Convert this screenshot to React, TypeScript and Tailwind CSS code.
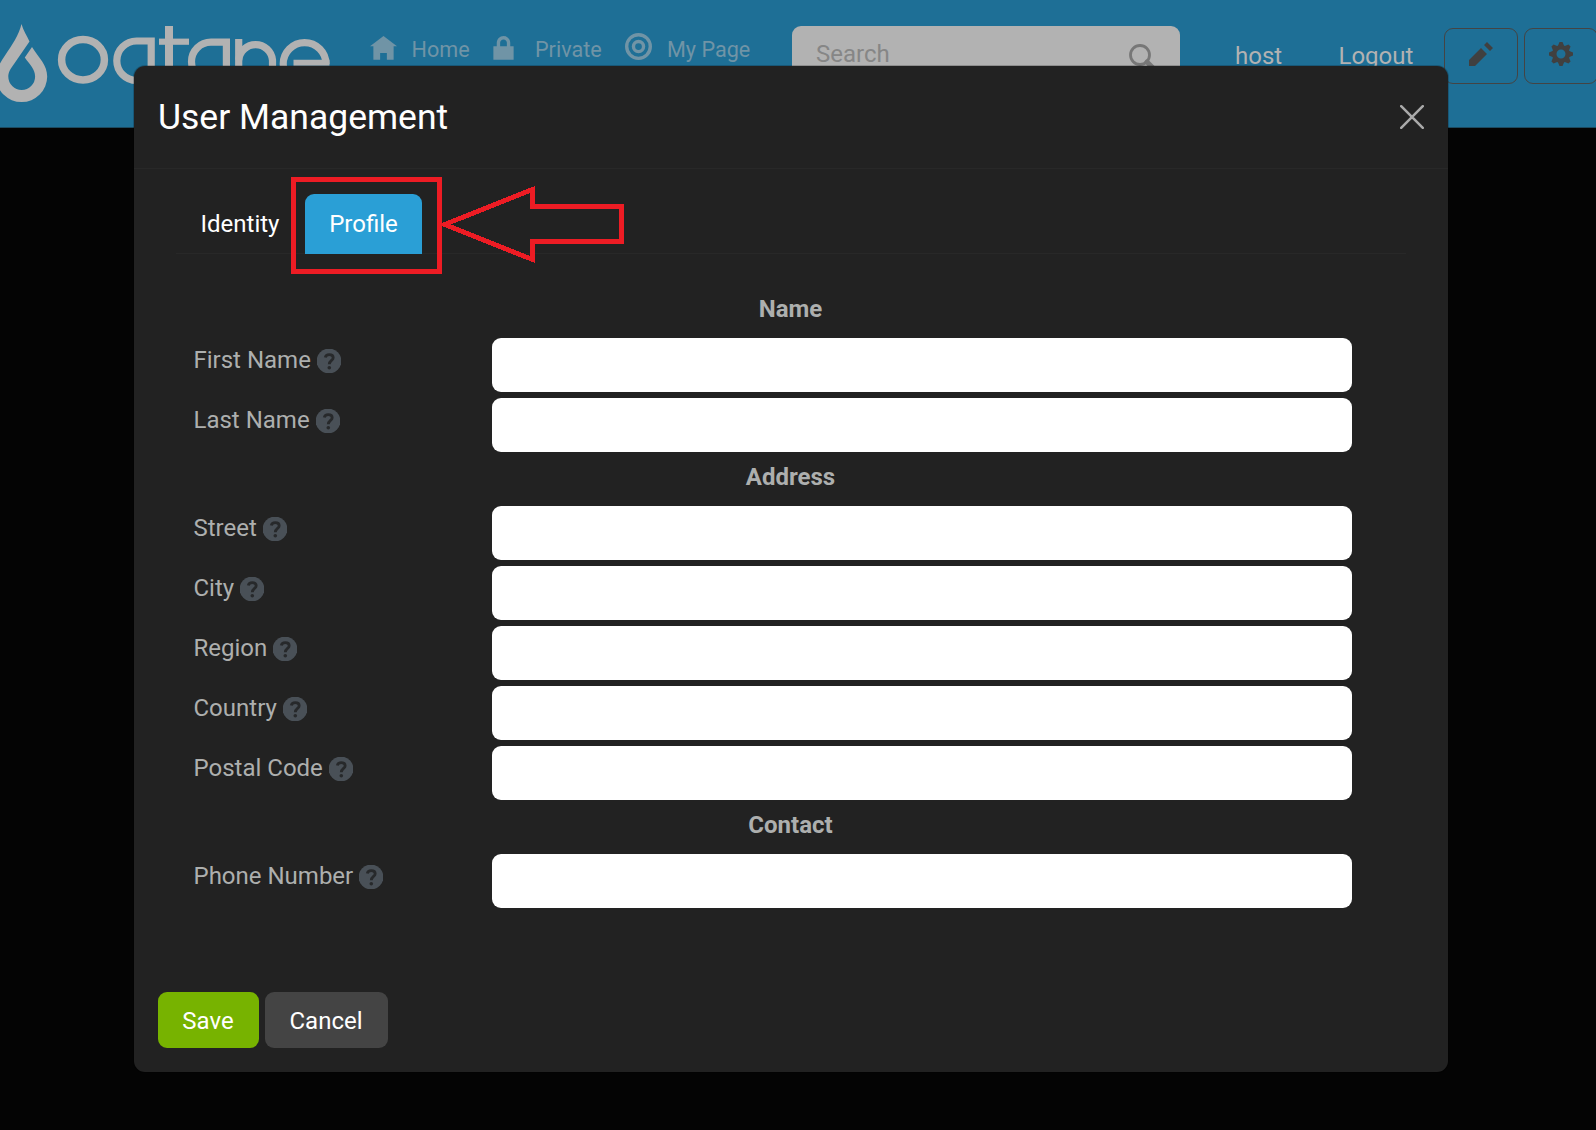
import type { ReactNode } from 'react'

function OiIcon({ d, className }: { d: string; className: string }) {
  return (
    <svg viewBox="0 0 8 8" className={className} fill="currentColor" fillRule="evenodd">
      <path d={d} />
    </svg>
  )
}

const HOME = 'M4 0l-4 3h1v4h2v-2h2v2h2v-4h1l-4-3z'
const LOCK =
  'M4 0c-1.1 0-2 .9-2 2v1h-1v4h6v-4h-1v-1c0-1.1-.9-2-2-2zm0 1c.56 0 1 .44 1 1v1h-2v-1c0-.56.44-1 1-1z'
const TARGET =
  'M4 0a4 4 0 1 0 0 8a4 4 0 1 0 0-8zM4 1a3 3 0 1 1 0 6a3 3 0 1 1 0-6zM4 2a2 2 0 1 0 0 4a2 2 0 1 0 0-4zM4 3a1 1 0 1 1 0 2a1 1 0 1 1 0-2z'
const PENCIL = 'M6 0l-1 1 2 2 1-1-2-2zm-2 2l-4 4v2h2l4-4-2-2z'
const COG =
  'M3.5 0l-.5 1.19c-.1.03-.19.08-.28.13l-1.19-.5-.72.72.5 1.19c-.05.1-.09.18-.13.28l-1.19.5v1l1.19.5c.04.1.08.18.13.28l-.5 1.19.72.72 1.19-.5c.09.04.18.09.28.13l.5 1.19h1l.5-1.19c.09-.04.19-.08.28-.13l1.19.5.72-.72-.5-1.19c.04-.09.09-.19.13-.28l1.19-.5v-1l-1.19-.5c-.03-.09-.08-.19-.13-.28l.5-1.19-.72-.72-1.19.5c-.09-.04-.19-.09-.28-.13l-.5-1.19h-1zm.5 2.5c.83 0 1.5.67 1.5 1.5s-.67 1.5-1.5 1.5-1.5-.67-1.5-1.5.67-1.5 1.5-1.5z'

function Logo() {
  return (
    <svg width="340" height="127" viewBox="0 0 340 127" className="shrink-0" fill="none" stroke="#b2b2b2">
      <path
        fill="#b2b2b2"
        stroke="none"
        d="M21.500 24C23 30 27 36 29.500 41.500L14 64C10 69.500 8.300 72.500 8.300 76.500A13.400 13.400 0 0 0 35.100 76.500C35.100 69 30 65 24.800 57.500L32 47C39 58 47.200 65 47.200 76.500A25.600 25.600 0 0 1 -4 76.500C-4 69 0 63 5 55.500C12 45 19 35 21.500 24Z"
      />
      <g strokeWidth="7.200">
        <ellipse cx="83" cy="59.700" rx="21.400" ry="20.200" strokeWidth="7.500" />
        <path d="M151.200 80V41H136.500A19.700 19.700 0 0 0 136.500 80.400H151.200" />
        <path d="M169 26V80" strokeWidth="8" />
        <path d="M159 41.700H189" strokeWidth="6.200" />
        <path d="M226.400 80V42.200H211A19.500 19.500 0 0 0 211 81.200" />
        <path d="M238.700 80V39" />
        <path d="M238.700 60A17 17.300 0 0 1 272.500 60V80" />
        <path d="M326 64A21.400 21.400 0 1 0 304.600 85.400" />
        <path d="M293.500 62.800H329.500" strokeWidth="6" />
      </g>
    </svg>
  )
}

function Help() {
  return (
    <svg viewBox="0 0 24 24" className="h-6 w-6">
      <circle cx="12" cy="12" r="12.400" fill="#495057" />
      <path
        d="M8.300 8.600C8.700 6.500 10 5.700 12.200 5.700S16.200 6.800 16.200 8.700C16.200 11.500 12.300 11.300 12.300 15.300"
        fill="none"
        stroke="#27292b"
        strokeWidth="2.800"
      />
      <circle cx="12.300" cy="18.700" r="1.800" fill="#27292b" />
    </svg>
  )
}

function Section({ title }: { title: string }) {
  return <h2 className="flex h-12 justify-center pt-px pl-px leading-9 font-bold">{title}</h2>
}

function Field({ label }: { label: string }) {
  return (
    <label className="mb-1.5 flex h-[54px]">
      <span className="flex w-[298.5px] items-start gap-1.5 pt-1 leading-9">
        {label}
        <span className="mt-[7px]">
          <Help />
        </span>
      </span>
      <input className="h-[54px] w-[860px] rounded-[9px] bg-white px-4 text-black outline-none" />
    </label>
  )
}

function NavItem({ icon, children, className }: { icon: ReactNode; children: string; className: string }) {
  return (
    <a className={`flex shrink-0 ${className}`}>
      {icon}
      <span className="mt-8 text-[21.6px] leading-9 whitespace-nowrap">{children}</span>
    </a>
  )
}

function Header() {
  return (
    <header className="flex h-[127.5px] w-[1620px] items-start border-b border-[#1c4a60] bg-[#1e6f96] text-[#7094a6]">
      <Logo />
      <NavItem className="ml-[30px] w-[120px]" icon={<OiIcon d={HOME} className="mt-9 mr-[14.5px] h-[27px] w-[27px]" />}>
        Home
      </NavItem>
      <NavItem className="w-[135px]" icon={<OiIcon d={LOCK} className="mt-9 mr-[18px] h-[27px] w-[27px]" />}>
        Private
      </NavItem>
      <NavItem className="w-[167px]" icon={<OiIcon d={TARGET} className="mt-[33px] mr-[15px] h-[27px] w-[27px]" />}>
        My Page
      </NavItem>
      <div className="mt-[26px] flex h-[54px] w-[388px] shrink-0 items-center justify-between rounded-[9px] bg-[#b2b2b2] pr-[25px] pl-6 text-[#868686]">
        <span className="pt-0.5">Search</span>
        <svg viewBox="0 0 26 26" className="mt-2 h-[26px] w-[26px]" fill="none" stroke="#777">
          <circle cx="11" cy="11" r="9.500" strokeWidth="2.800" />
          <path d="M18 18L24 24" strokeWidth="5" strokeLinecap="round" />
        </svg>
      </div>
      <span className="mt-[38px] ml-[55px] w-[103.5px] shrink-0 leading-9 text-[#b2b2b2]">host</span>
      <span className="mt-[38px] w-[105.5px] shrink-0 leading-9 text-[#b2b2b2]">Logout</span>
      <button className="mt-7 flex h-14 w-[74px] shrink-0 justify-center rounded-[9px] border border-[#444] pt-[13px] text-[#404040]">
        <OiIcon d={PENCIL} className="h-6 w-6" />
      </button>
      <button className="mt-7 ml-1.5 flex h-14 w-[74px] shrink-0 justify-center rounded-[9px] border border-[#444] pt-[13px] text-[#404040]">
        <OiIcon d={COG} className="h-6 w-6" />
      </button>
    </header>
  )
}

function Annotation() {
  return (
    <svg width="340" height="100" viewBox="290 176 340 100" className="pointer-events-none absolute top-[110px] left-[156px]" fill="none" stroke="#ed1c24" strokeWidth="5" shapeRendering="crispEdges">
      <path d="M293.500 179.500H439.500V271.500H293.500Z" />
      <path d="M444.500 224.500L532.500 189.500V206.500H621.500V241.500H532.500V259.500Z" strokeWidth="4.800" />
    </svg>
  )
}

export default function App() {
  return (
    <div className="relative h-[1130px] w-[1596px] overflow-hidden bg-[#040404] text-2xl font-normal" style={{ fontFamily: 'Roboto, sans-serif' }}>
      <Header />
      <main className="absolute top-[66px] left-[134px] h-[1006px] w-[1314px] rounded-[11px] bg-[#222] text-[#adafae] shadow-[0_0_0_1px_rgba(0,0,0,0.2)]">
        <div className="flex h-[103px] items-center justify-between border-b border-[#282828] px-6">
          <h1 className="text-[35.5px] leading-10 text-white">User Management</h1>
          <svg viewBox="0 0 24 24" className="-mt-px h-6 w-6" stroke="#aaa" strokeWidth="2.500" strokeLinecap="round">
            <path d="M1.200 1.200L22.800 22.800M22.800 1.200L1.200 22.800" />
          </svg>
        </div>
        <nav className="mx-[42px] mt-[25px] flex h-[60px] border-b border-[#282828] text-white">
          <a className="w-[129px] pt-3 pl-[24.5px] leading-9">Identity</a>
          <a className="h-[60px] w-[117px] rounded-t-[9px] bg-[#2a9fd6] pt-3 text-center leading-9">Profile</a>
        </nav>
        <form className="mt-9 ml-[59.5px] w-[1193px]">
          <Section title="Name" />
          <Field label="First Name" />
          <Field label="Last Name" />
          <Section title="Address" />
          <Field label="Street" />
          <Field label="City" />
          <Field label="Region" />
          <Field label="Country" />
          <Field label="Postal Code" />
          <Section title="Contact" />
          <Field label="Phone Number" />
        </form>
        <div className="mt-[84px] ml-6 flex gap-1.5 text-white">
          <button className="h-14 w-[101px] rounded-[9px] bg-[#77b300] pt-0.5 pr-px">Save</button>
          <button className="h-14 w-[123px] rounded-[9px] bg-[#444] pt-0.5 pr-px">Cancel</button>
        </div>
        <Annotation />
      </main>
    </div>
  )
}
